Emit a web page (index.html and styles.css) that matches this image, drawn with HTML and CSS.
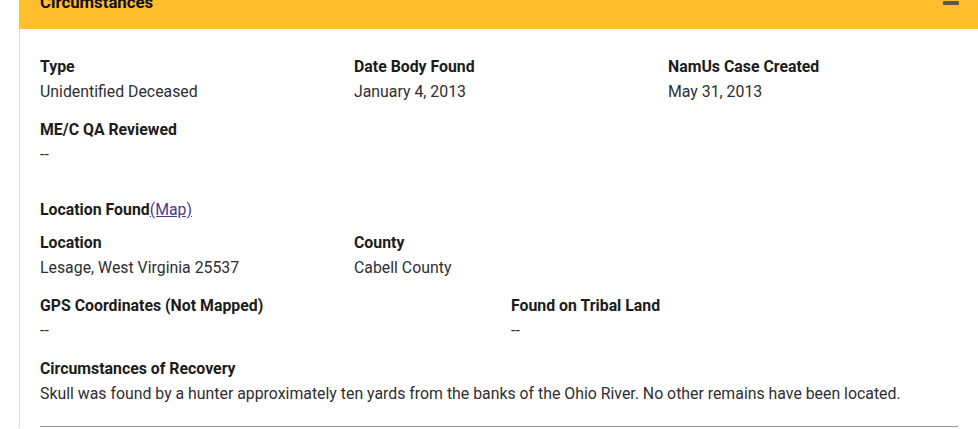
FILE: index.html
```html
<!DOCTYPE html>
<html lang="en">
<head>
<meta charset="utf-8">
<title>Circumstances</title>
<link rel="stylesheet" href="styles.css">
</head>
<body>
<section class="panel">
  <header class="panel-header">
    <h2 class="panel-title">Circumstances</h2>
    <span class="collapse-icon" aria-label="Collapse"></span>
  </header>
  <div class="panel-body">
    <div class="grid grid-3">
      <div class="field">
        <div class="label">Type</div>
        <div class="value">Unidentified Deceased</div>
      </div>
      <div class="field">
        <div class="label">Date Body Found</div>
        <div class="value">January 4, 2013</div>
      </div>
      <div class="field">
        <div class="label">NamUs Case Created</div>
        <div class="value">May 31, 2013</div>
      </div>
      <div class="field">
        <div class="label">ME/C QA Reviewed</div>
        <div class="value">--</div>
      </div>
    </div>

    <div class="section">
      <h3 class="section-title">Location Found<a class="map-link" href="#">(Map)</a></h3>
      <div class="grid grid-3">
        <div class="field">
          <div class="label">Location</div>
          <div class="value">Lesage, West Virginia 25537</div>
        </div>
        <div class="field">
          <div class="label">County</div>
          <div class="value">Cabell County</div>
        </div>
      </div>
      <div class="grid grid-2">
        <div class="field">
          <div class="label">GPS Coordinates (Not Mapped)</div>
          <div class="value">--</div>
        </div>
        <div class="field">
          <div class="label">Found on Tribal Land</div>
          <div class="value">--</div>
        </div>
      </div>
      <div class="field">
        <div class="label">Circumstances of Recovery</div>
        <div class="value">Skull was found by a hunter approximately ten yards from the banks of the Ohio River. No other remains have been located.</div>
      </div>
    </div>
    <hr class="divider">
  </div>
</section>
</body>
</html>
```

FILE: styles.css
```css
html, body {
  margin: 0;
  padding: 0;
  background: #ffffff;
  overflow: hidden;
}

body {
  font-family: Roboto, "Liberation Sans", Arial, sans-serif;
  font-size: 15.85px;
  color: #2b2b2b;
}

.panel {
  margin-left: 19px;
  width: 959px;
}

.panel-header {
  height: 29px;
  background: #febe2e;
  display: flex;
  justify-content: space-between;
  align-items: flex-start;
  padding: 0 19px 0 21px;
  box-sizing: border-box;
  overflow: hidden;
}

.panel-title {
  margin: -9px 0 0 0;
  font-size: 16.8px;
  line-height: 22px;
  font-weight: 700;
  color: #111111;
}

.collapse-icon {
  display: block;
  width: 16px;
  height: 4px;
  margin-top: 1px;
  background: #54575d;
  border-radius: 1px;
}

.panel-body {
  border-left: 1px solid #dddddd;
  padding: 25px 20px 0 20px;
}

.grid {
  display: grid;
  column-gap: 24px;
}

.grid-3 {
  grid-template-columns: repeat(3, 1fr);
}

.grid-2 {
  grid-template-columns: repeat(2, 1fr);
}

.field {
  margin-bottom: 12px;
}

.label {
  font-weight: 700;
  line-height: 25px;
  color: #1c1c1c;
}

.value {
  line-height: 26px;
  color: #2e2e33;
}

.section {
  margin-top: 17px;
}

.section-title {
  margin: 0 0 8px 0;
  font-size: 15.85px;
  line-height: 25px;
  font-weight: 700;
  color: #1c1c1c;
}

.map-link {
  font-weight: 400;
  color: #4b3a8c;
  text-decoration: underline;
}

.divider {
  margin: 19px 0 0 0;
  border: 0;
  border-top: 1px solid #9a9a9a;
  height: 0;
}
```
